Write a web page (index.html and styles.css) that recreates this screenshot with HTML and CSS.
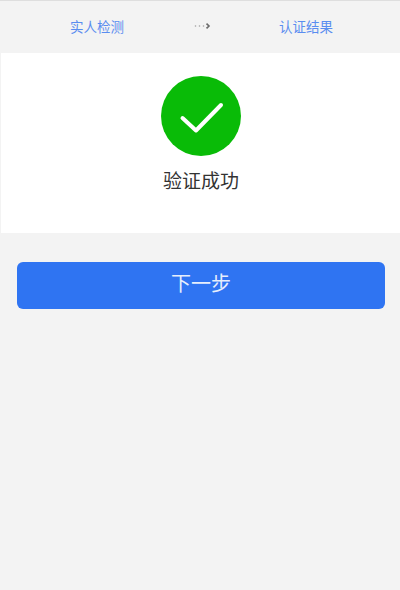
FILE: index.html
```html
<!DOCTYPE html>
<html lang="zh-CN">
<head>
<meta charset="utf-8">
<title>认证结果</title>
<link rel="stylesheet" href="styles.css">
</head>
<body>
<header class="steps">
  <span class="step">实人检测</span>
  <span class="arrow">
    <svg width="18" height="8" viewBox="0 0 18 8"><g fill="#a0a0a0"><circle cx="1.5" cy="4" r="0.8"/><circle cx="5.5" cy="4" r="0.8"/><circle cx="9.5" cy="4" r="0.8"/></g><path d="M12.5 1.6 L15 4 L12.5 6.4" fill="none" stroke="#6a6a6a" stroke-width="1.6"/></svg>
  </span>
  <span class="step">认证结果</span>
</header>
<section class="result">
  <svg class="badge" width="80" height="80" viewBox="0 0 80 80">
    <circle cx="40" cy="40" r="40" fill="#09bb07"/>
    <path d="M21.5 42 L35 54.5 L60 29" fill="none" stroke="#fff" stroke-width="4" stroke-linecap="round" stroke-linejoin="round"/>
  </svg>
  <h1 class="title">验证成功</h1>
</section>
<div class="actions">
  <button class="next" type="button">下一步</button>
</div>
</body>
</html>
```
FILE: styles.css
```css
html, body {
  margin: 0;
  padding: 0;
  height: 100%;
}
body {
  background: #f3f3f3;
  font-family: "Noto Sans CJK SC", "Liberation Sans", sans-serif;
  border-top: 1px solid #dedede;
  box-sizing: border-box;
}
.steps {
  display: grid;
  grid-template-columns: 194px 18px 188px;
  align-items: center;
  height: 52px;
  padding-bottom: 3px;
  box-sizing: border-box;
}
.step {
  font-size: 13.5px;
  line-height: 18px;
  color: #5a8df0;
  text-align: center;
}
.arrow {
  display: flex;
}
.result {
  display: flex;
  flex-direction: column;
  align-items: center;
  height: 180px;
  margin-left: 1px;
  padding: 23px 0 0 1px;
  background: #fff;
  box-sizing: border-box;
}
.badge {
  display: block;
}
.title {
  margin: 10px 0 0;
  font-size: 19px;
  line-height: 28px;
  font-weight: 400;
  color: #333;
}
.actions {
  padding: 29px 15px 0 17px;
}
.next {
  display: block;
  width: 100%;
  height: 47px;
  border: 0;
  border-radius: 6px;
  background: #2f74f2;
  color: #e6eefc;
  font: 400 20px/39px "Noto Sans CJK SC", "Liberation Sans", sans-serif;
  padding: 0 0 6px;
}
```
